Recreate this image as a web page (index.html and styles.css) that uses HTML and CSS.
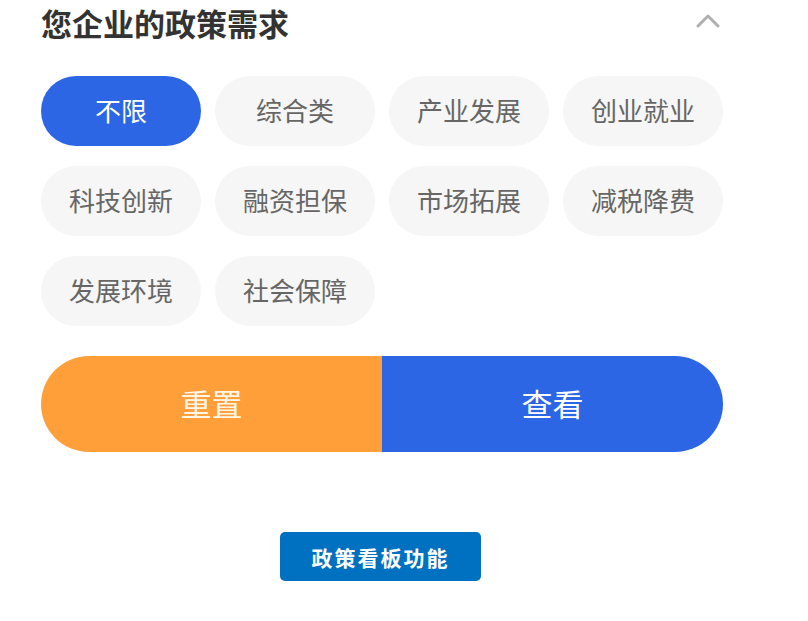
FILE: index.html
```html
<!DOCTYPE html>
<html lang="zh-CN">
<head>
<meta charset="utf-8">
<title>政策需求</title>
<link rel="stylesheet" href="styles.css">
</head>
<body>
<div class="panel">
  <div class="header">
    <h1 class="title">您企业的政策需求</h1>
    <svg class="chevron" width="24" height="16" viewBox="0 0 24 16">
      <path d="M2 13 L12 3 L22 13" fill="none" stroke="#b0b0b0" stroke-width="3" stroke-linecap="round" stroke-linejoin="round"/>
    </svg>
  </div>
  <div class="chips">
    <div class="chip active">不限</div>
    <div class="chip">综合类</div>
    <div class="chip">产业发展</div>
    <div class="chip">创业就业</div>
    <div class="chip">科技创新</div>
    <div class="chip">融资担保</div>
    <div class="chip">市场拓展</div>
    <div class="chip">减税降费</div>
    <div class="chip">发展环境</div>
    <div class="chip">社会保障</div>
  </div>
  <div class="actions">
    <div class="btn reset">重置</div>
    <div class="btn view">查看</div>
  </div>
</div>
<div class="footer">
  <div class="board-btn">政策看板功能</div>
</div>
</body>
</html>
```

FILE: styles.css
```css
html, body {
  margin: 0;
  padding: 0;
  background: #ffffff;
  font-family: "Noto Sans CJK SC", "Noto Sans", sans-serif;
}

.panel {
  padding-left: 41px;
  width: 682px;
}

.header {
  display: flex;
  align-items: center;
  justify-content: space-between;
}

.title {
  margin: 0;
  font-size: 31px;
  font-weight: 700;
  color: #333333;
  line-height: 45px;
}

.chevron {
  margin-right: 3px;
  margin-top: -4px;
}

.chips {
  margin-top: 31px;
  display: grid;
  grid-template-columns: repeat(4, 160px);
  column-gap: 14px;
  row-gap: 20px;
}

.chip {
  height: 70px;
  box-sizing: border-box;
  padding-bottom: 4px;
  border-radius: 35px;
  background: #f6f6f6;
  color: #666666;
  font-size: 26px;
  display: flex;
  align-items: center;
  justify-content: center;
}

.chip.active {
  background: #2c66e5;
  color: #ffffff;
}

.actions {
  margin-top: 30px;
  display: flex;
  height: 96px;
  border-radius: 48px;
  overflow: hidden;
}

.btn {
  flex: 1;
  display: flex;
  align-items: center;
  justify-content: center;
  padding-bottom: 4px;
  font-size: 31px;
  color: #ffffff;
}

.btn.reset {
  background: #fe9f3a;
  color: #fff6e6;
}

.btn.view {
  background: #2c66e5;
}

.footer {
  margin-top: 80px;
  padding-left: 280px;
}

.board-btn {
  width: 201px;
  height: 49px;
  border-radius: 5px;
  background: #0070c0;
  color: #ffffff;
  font-size: 21px;
  font-weight: 700;
  letter-spacing: 2px;
  display: flex;
  align-items: center;
  justify-content: center;
}
```
